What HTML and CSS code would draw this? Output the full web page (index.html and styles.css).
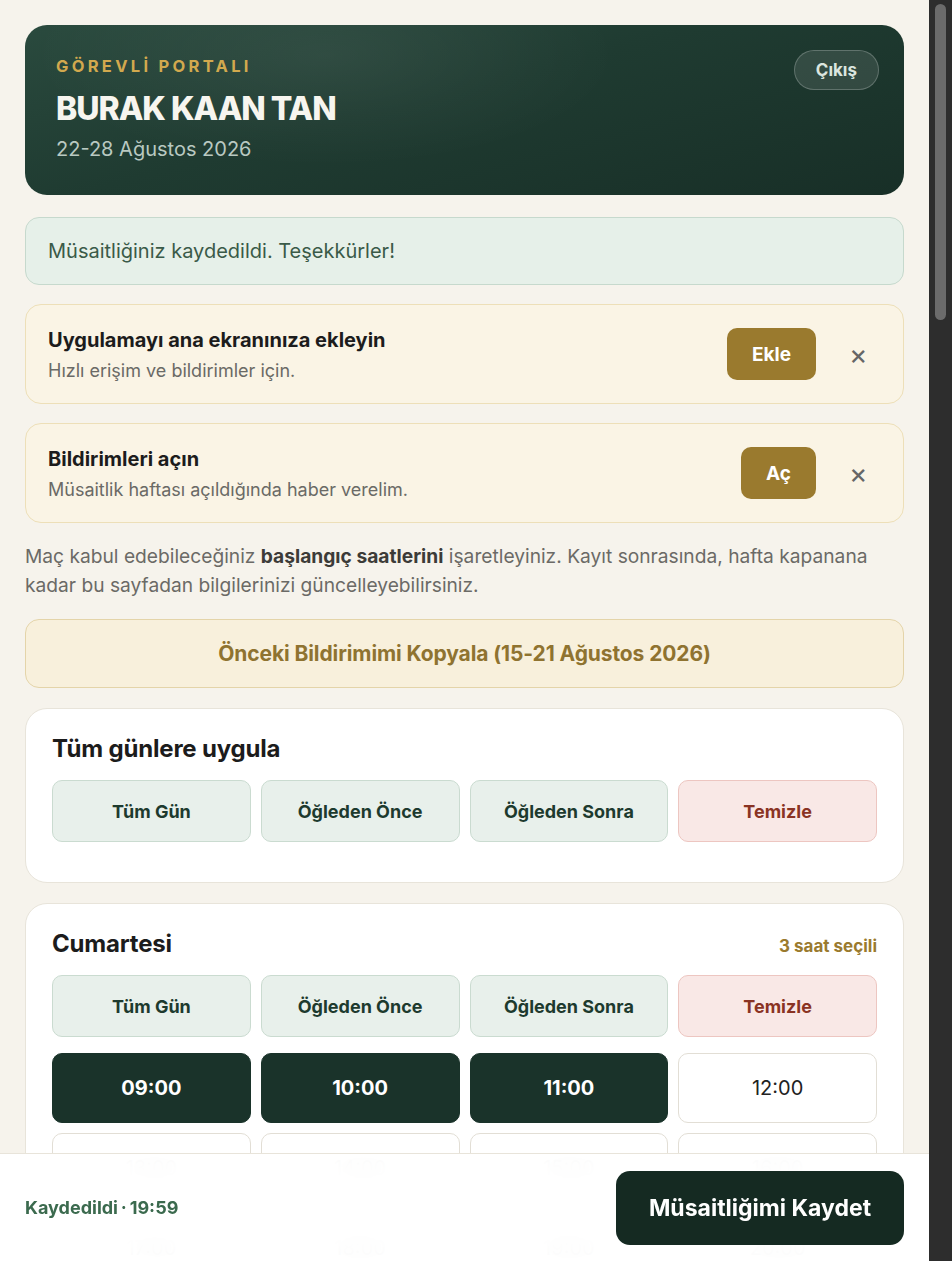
FILE: index.html
```html
<!DOCTYPE html>
<html lang="tr">
<head>
  <meta charset="UTF-8" />
  <meta name="viewport" content="width=device-width, initial-scale=1.0"/>
  <title>Görevli Portalı - Müsaitlik</title>
  <link rel="stylesheet" href="styles.css">
</head>
<body>

<main class="page">
  <header class="hero">
    <div class="hero-text">
      <p class="hero-kicker">GÖREVLİ PORTALI</p>
      <h1 class="hero-name">BURAK KAAN TAN</h1>
      <p class="hero-week">22-28 Ağustos 2026</p>
    </div>
    <button class="logout">Çıkış</button>
  </header>

  <div class="alert-ok">Müsaitliğiniz kaydedildi. Teşekkürler!</div>

  <div class="prompt">
    <div class="prompt-text">
      <strong>Uygulamayı ana ekranınıza ekleyin</strong>
      <span>Hızlı erişim ve bildirimler için.</span>
    </div>
    <button class="prompt-btn">Ekle</button>
    <button class="prompt-close" aria-label="Kapat">&times;</button>
  </div>

  <div class="prompt">
    <div class="prompt-text">
      <strong>Bildirimleri açın</strong>
      <span>Müsaitlik haftası açıldığında haber verelim.</span>
    </div>
    <button class="prompt-btn">Aç</button>
    <button class="prompt-close" aria-label="Kapat">&times;</button>
  </div>

  <p class="intro">Maç kabul edebileceğiniz <b>başlangıç saatlerini</b> işaretleyiniz. Kayıt sonrasında, hafta kapanana kadar bu sayfadan bilgilerinizi güncelleyebilirsiniz.</p>

  <button class="copy-prev">Önceki Bildirimimi Kopyala (15-21 Ağustos 2026)</button>

  <section class="card">
    <div class="card-head">
      <h2>Tüm günlere uygula</h2>
    </div>
    <div class="grid">
      <button class="quick">Tüm Gün</button>
      <button class="quick">Öğleden Önce</button>
      <button class="quick">Öğleden Sonra</button>
      <button class="quick clear">Temizle</button>
    </div>
  </section>

  <section class="card">
    <div class="card-head">
      <h2>Cumartesi</h2>
      <span class="count">3 saat seçili</span>
    </div>
    <div class="grid">
      <button class="quick">Tüm Gün</button>
      <button class="quick">Öğleden Önce</button>
      <button class="quick">Öğleden Sonra</button>
      <button class="quick clear">Temizle</button>
    </div>
    <div class="grid slots">
      <button class="slot on">09:00</button>
      <button class="slot on">10:00</button>
      <button class="slot on">11:00</button>
      <button class="slot">12:00</button>
      <button class="slot">13:00</button>
      <button class="slot">14:00</button>
      <button class="slot">15:00</button>
      <button class="slot">16:00</button>
      <button class="slot">17:00</button>
      <button class="slot">18:00</button>
      <button class="slot">19:00</button>
      <button class="slot">20:00</button>
    </div>
  </section>
</main>

<footer class="savebar">
  <span class="saved">Kaydedildi&thinsp;·&thinsp;19:59</span>
  <button class="save">Müsaitliğimi Kaydet</button>
</footer>

<div class="scrollbar"><div class="thumb"></div></div>

</body>
</html>
```

FILE: styles.css
```css
body {
  font-family: 'Inter', 'Noto Sans', sans-serif;
  background-color: #f6f3ec;
  color: #1e1e1e;
  margin: 0;
  margin-right: 23px;
}
button {
  font-family: inherit;
  cursor: pointer;
}
.page {
  display: flex;
  flex-direction: column;
  gap: 19px;
  padding: 25px 25px 140px;
}

/* header */
.hero {
  display: flex;
  justify-content: space-between;
  align-items: flex-start;
  padding: 25px 25px 34px 31px;
  border-radius: 22px;
  color: white;
  background:
    radial-gradient(ellipse 420px 160px at 300px 30px, rgba(255,255,255,0.06), transparent 70%),
    linear-gradient(165deg, #2a4a3e 0%, #1f3b31 45%, #182f27 100%);
}
.hero p, .hero h1 {
  margin: 0;
}
.hero-kicker {
  padding-top: 6px;
  font-size: 16.5px;
  font-weight: 700;
  letter-spacing: 3.3px;
  color: #d2a94e;
}
.hero-name {
  margin-top: 13px !important;
  font-size: 32px;
  font-weight: 800;
  letter-spacing: -1px;
  color: #f7f5ef;
}
.hero-week {
  margin-top: 9px !important;
  font-size: 20px;
  color: #b9c9c1;
}
.logout {
  padding: 9px 21px;
  border-radius: 20px;
  border: 1px solid rgba(255,255,255,0.22);
  background: rgba(255,255,255,0.1);
  color: #dbe5df;
  font-size: 17px;
  font-weight: 700;
}

/* notices */
.alert-ok {
  margin-top: 3px;
  padding: 21px 22px;
  border-radius: 14px;
  border: 1.5px solid #c6d9cd;
  background: #e6f0e9;
  color: #3a5a48;
  font-size: 20px;
}
.prompt {
  display: flex;
  align-items: center;
  padding: 22.5px 22px;
  border-radius: 16px;
  border: 1.5px solid #eddfb8;
  background: #faf4e5;
}
.prompt-text {
  flex: 1;
  display: flex;
  flex-direction: column;
  gap: 8px;
}
.prompt-text strong {
  font-size: 20px;
  color: #1c1c1c;
}
.prompt-text span {
  font-size: 18px;
  color: #6a6a66;
}
.prompt-btn {
  height: 52px;
  padding: 0 25px;
  border: none;
  border-radius: 10px;
  background: #9a7a2e;
  color: white;
  font-size: 19px;
  font-weight: 700;
}
.prompt-close {
  width: 30px;
  margin: 0 8px 0 27px;
  border: none;
  background: none;
  color: #666;
  font-size: 28px;
  line-height: 1;
}

.intro {
  margin: 0;
  font-size: 19.2px;
  line-height: 29px;
  color: #6b6a66;
}
.intro b {
  color: #3c3b38;
}
.copy-prev {
  height: 69px;
  border-radius: 14px;
  border: 1.5px solid #e4d4a9;
  background: #f8f0dc;
  color: #8f7330;
  font-size: 21px;
  font-weight: 700;
  letter-spacing: -0.1px;
}

/* day cards */
.card {
  margin-top: 1px;
  padding: 25px 26px 40px;
  border-radius: 22px;
  border: 1.5px solid #e8e4da;
  background: white;
}
.card-head {
  display: flex;
  justify-content: space-between;
  align-items: baseline;
  margin-bottom: 17px;
}
.card-head h2 {
  margin: 0;
  font-size: 24px;
  font-weight: 700;
  letter-spacing: -0.2px;
  color: #1c1c1c;
}
.count {
  font-size: 17px;
  font-weight: 700;
  color: #9a7a2e;
}
.grid {
  display: grid;
  grid-template-columns: repeat(4, 1fr);
  gap: 10px;
}
.slots {
  margin-top: 16px;
}
.quick {
  height: 62px;
  border-radius: 10px;
  border: 1.5px solid #cadbd0;
  background: #e8f0eb;
  color: #1d3a2e;
  font-size: 18px;
  font-weight: 700;
}
.quick.clear {
  border-color: #edc6c1;
  background: #f9e8e6;
  color: #8a3323;
}
.slot {
  height: 70px;
  border-radius: 10px;
  border: 1.5px solid #e2ded5;
  background: white;
  color: #222;
  font-size: 20px;
}
.slot.on {
  border-color: #1a332a;
  background: #1a332a;
  color: white;
  font-weight: 700;
}

/* sticky save bar */
.savebar {
  position: fixed;
  left: 0;
  right: 23px;
  bottom: 0;
  height: 107px;
  display: flex;
  align-items: center;
  justify-content: space-between;
  padding: 0 25px;
  border-top: 1.5px solid #e8e4da;
  background: rgba(255,255,255,0.96);
  backdrop-filter: blur(12px);
}
.saved {
  font-size: 18px;
  font-weight: 700;
  color: #3b6a4e;
}
.save {
  width: 288px;
  height: 74px;
  border: none;
  border-radius: 14px;
  background: #152a22;
  color: white;
  font-size: 23px;
  font-weight: 700;
}

.scrollbar {
  position: fixed;
  top: 0;
  right: 0;
  bottom: 0;
  width: 23px;
  background: #2d2d2d;
}
.thumb {
  margin: 4px 6px 0 6px;
  height: 316px;
  border-radius: 6px;
  background: #6b6b6b;
}
```
